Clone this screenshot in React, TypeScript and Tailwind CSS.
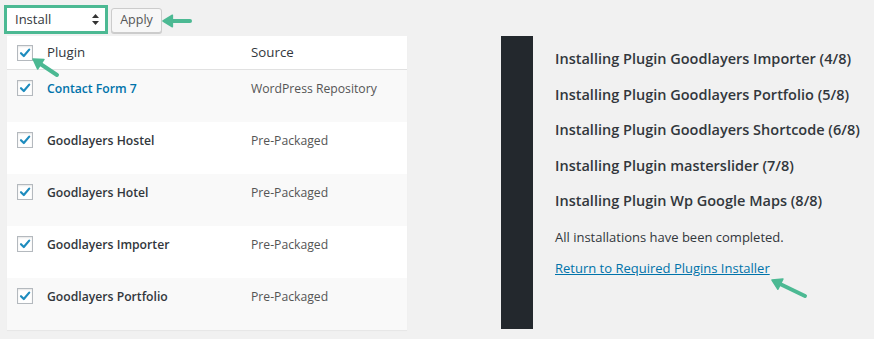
import { ReactNode } from "react";

const GREEN = "#4cb993";

const plugins = [
  { name: "Contact Form 7", source: "WordPress Repository", link: true },
  { name: "Goodlayers Hostel", source: "Pre-Packaged" },
  { name: "Goodlayers Hotel", source: "Pre-Packaged" },
  { name: "Goodlayers Importer", source: "Pre-Packaged" },
  { name: "Goodlayers Portfolio", source: "Pre-Packaged" },
];

const steps = [
  "Installing Plugin Goodlayers Importer (4/8)",
  "Installing Plugin Goodlayers Portfolio (5/8)",
  "Installing Plugin Goodlayers Shortcode (6/8)",
  "Installing Plugin masterslider (7/8)",
  "Installing Plugin Wp Google Maps (8/8)",
];

function Checkbox() {
  return (
    <span className="flex h-[16px] w-[16px] shrink-0 items-center justify-center border border-[#b4b9be] bg-white shadow-[inset_0_1px_2px_rgba(0,0,0,0.1)]">
      <svg width="12" height="12" viewBox="0 0 12 12">
        <path d="M2 6.2 L4.8 9 L10.2 2.6" fill="none" stroke="#1e8cbe" strokeWidth="2.2" strokeLinecap="round" strokeLinejoin="round" />
      </svg>
    </span>
  );
}

// arrow drawn from tail (x1,y1) to tip (x2,y2)
function Arrow({ className, x1, y1, x2, y2, w, h }: { className: string; x1: number; y1: number; x2: number; y2: number; w: number; h: number }) {
  const a = Math.atan2(y2 - y1, x2 - x1);
  const len = 11;
  const spread = 0.55;
  const bx = x2 - Math.cos(a) * (len - 2);
  const by = y2 - Math.sin(a) * (len - 2);
  const p1 = `${x2 - Math.cos(a - spread) * len},${y2 - Math.sin(a - spread) * len}`;
  const p2 = `${x2 - Math.cos(a + spread) * len},${y2 - Math.sin(a + spread) * len}`;
  return (
    <svg className={className} width={w} height={h} viewBox={`0 0 ${w} ${h}`}>
      <line x1={x1} y1={y1} x2={bx} y2={by} stroke={GREEN} strokeWidth="4" strokeLinecap="round" />
      <polygon points={`${x2},${y2} ${p1} ${p2}`} fill={GREEN} stroke={GREEN} strokeWidth="1.5" strokeLinejoin="round" />
    </svg>
  );
}

function Row({ children, striped }: { children: ReactNode; striped?: boolean }) {
  return (
    <div className={`flex h-[52px] items-start pt-[9px] ${striped ? "bg-[#f9f9f9]" : "bg-white"}`}>
      {children}
    </div>
  );
}

export default function App() {
  return (
    <div
      className="relative flex h-[339px] w-[874px] overflow-hidden bg-[#f1f1f1] text-[12.2px] text-[#32373c]"
      style={{ fontFamily: '"Open Sans", "Noto Sans", sans-serif' }}
    >
      {/* left: bulk action + table */}
      <div className="flex w-[420px] flex-col pl-[4px] pt-[5px]">
        <div className="flex items-center gap-[3px]">
          <div className="h-[29px] w-[104px] border-[3px] border-[#4cb993] bg-white">
            <div className="flex h-full items-center justify-between pl-[8px] pr-[6px] text-[13px] text-[#32373c]">
              <span>Install</span>
              <svg width="7" height="11" viewBox="0 0 7 11">
                <path d="M3.5 0 L7 4 L0 4 Z M3.5 11 L7 7 L0 7 Z" fill="#333" />
              </svg>
            </div>
          </div>
          <button className="mt-[1px] flex h-[25px] w-[51px] items-center justify-center rounded-[3px] border border-[#cccccc] bg-[#f7f7f7] text-[12.5px] text-[#555] shadow-[0_1px_0_#ccc]">
            Apply
          </button>
        </div>

        <div className="ml-[3px] mt-[2px] w-[400px] shadow-[0_1px_1px_rgba(0,0,0,0.04)]">
          <div className="flex h-[34px] items-center border-b border-[#e1e1e1] bg-white text-[13.3px] text-[#32373c]">
            <span className="ml-[10px] mr-[14px]">
              <Checkbox />
            </span>
            <span className="w-[204px]">Plugin</span>
            <span>Source</span>
          </div>
          {plugins.map((p, i) => (
            <Row key={p.name} striped={i % 2 === 0}>
              <span className="ml-[10px] mr-[14px] mt-[1px]">
                <Checkbox />
              </span>
              <span className={`w-[204px] font-semibold leading-[19px] ${p.link ? "text-[#0073aa]" : "text-[#32373c]"}`}>{p.name}</span>
              <span className="leading-[19px] text-[#555]">{p.source}</span>
            </Row>
          ))}
        </div>
      </div>

      {/* right: install log */}
      <div className="ml-[81px] flex pt-[36px]">
        <div className="h-[293px] w-[32px] bg-[#23282d]" />
        <div className="ml-[22px] flex flex-col pt-[13px] leading-[20px]">
          {steps.map((s) => (
            <p key={s} className="mb-[15.5px] text-[14.5px] font-semibold text-[#32373c]">
              {s}
            </p>
          ))}
          <p className="text-[13px] text-[#32373c]">All installations have been completed.</p>
          <a href="#" className="mt-[11px] text-[13px] text-[#0073aa] underline">
            Return to Required Plugins Installer
          </a>
        </div>
      </div>

      {/* annotation arrows */}
      <Arrow className="absolute left-[160px] top-[12px]" w={34} h={18} x1={30} y1={9} x2={3} y2={9} />
      <Arrow className="absolute left-[30px] top-[55px]" w={32} h={24} x1={27} y1={20} x2={3} y2={4} />
      <Arrow className="absolute left-[768px] top-[275px]" w={42} h={26} x1={37} y1={21} x2={4} y2={5} />
    </div>
  );
}
